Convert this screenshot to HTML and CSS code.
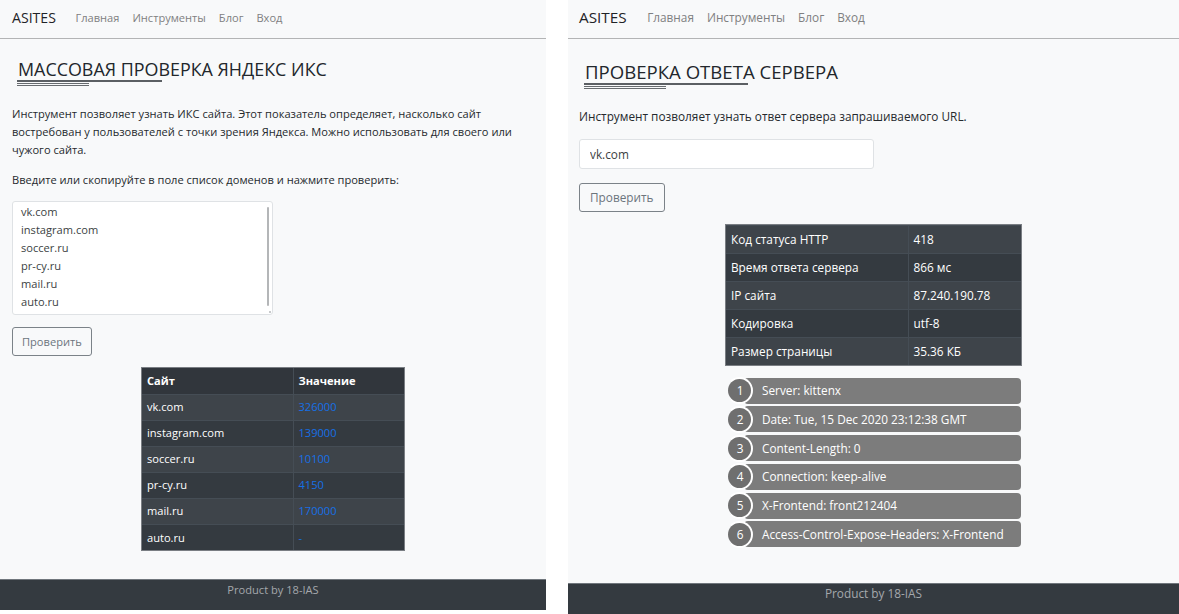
FILE: index.html
```html
<!DOCTYPE html>
<html lang="ru">
<head>
<meta charset="utf-8">
<title>ASITES</title>
<link rel="stylesheet" href="styles.css">
</head>
<body>
<div class="screens">
  <section class="panel panel-left">
    <header class="navbar">
      <a class="brand" href="#">ASITES</a>
      <nav class="nav">
        <a href="#">Главная</a>
        <a href="#">Инструменты</a>
        <a href="#">Блог</a>
        <a href="#">Вход</a>
      </nav>
    </header>
    <main class="content">
      <div class="heading">
        <h1 class="title">МАССОВАЯ ПРОВЕРКА ЯНДЕКС ИКС</h1>
        <div class="rule rule-main"></div>
        <div class="rule rule-sub"></div>
      </div>
      <p class="text">Инструмент позволяет узнать ИКС сайта. Этот показатель определяет, насколько сайт востребован у пользователей с точки зрения Яндекса. Можно использовать для своего или чужого сайта.</p>
      <p class="text">Введите или скопируйте в поле список доменов и нажмите проверить:</p>
      <div class="area-wrap">
        <textarea class="field field-area" spellcheck="false">vk.com
instagram.com
soccer.ru
pr-cy.ru
mail.ru
auto.ru</textarea>
        <span class="scroll-thumb"></span>
        <span class="resize-grip"></span>
      </div>
      <button class="btn">Проверить</button>
      <table class="dark-table iks-table">
        <thead>
          <tr><th>Сайт</th><th>Значение</th></tr>
        </thead>
        <tbody>
          <tr><td>vk.com</td><td class="val">326000</td></tr>
          <tr><td>instagram.com</td><td class="val">139000</td></tr>
          <tr><td>soccer.ru</td><td class="val">10100</td></tr>
          <tr><td>pr-cy.ru</td><td class="val">4150</td></tr>
          <tr><td>mail.ru</td><td class="val">170000</td></tr>
          <tr><td>auto.ru</td><td class="val">-</td></tr>
        </tbody>
      </table>
    </main>
    <footer class="footer">Product by 18-IAS</footer>
  </section>

  <section class="panel panel-right">
    <header class="navbar">
      <a class="brand" href="#">ASITES</a>
      <nav class="nav">
        <a href="#">Главная</a>
        <a href="#">Инструменты</a>
        <a href="#">Блог</a>
        <a href="#">Вход</a>
      </nav>
    </header>
    <main class="content">
      <div class="heading">
        <h1 class="title">ПРОВЕРКА ОТВЕТА СЕРВЕРА</h1>
        <div class="rule rule-main"></div>
        <div class="rule rule-sub"></div>
      </div>
      <p class="text">Инструмент позволяет узнать ответ сервера запрашиваемого URL.</p>
      <input class="field field-input" type="text" value="vk.com">
      <button class="btn">Проверить</button>
      <table class="dark-table info-table">
        <tbody>
          <tr><td>Код статуса HTTP</td><td>418</td></tr>
          <tr><td>Время ответа сервера</td><td>866 мс</td></tr>
          <tr><td>IP сайта</td><td>87.240.190.78</td></tr>
          <tr><td>Кодировка</td><td>utf-8</td></tr>
          <tr><td>Размер страницы</td><td>35.36 КБ</td></tr>
        </tbody>
      </table>
      <ol class="headers">
        <li class="header-item"><span class="num">1</span><span class="bar">Server: kittenx</span></li>
        <li class="header-item"><span class="num">2</span><span class="bar">Date: Tue, 15 Dec 2020 23:12:38 GMT</span></li>
        <li class="header-item"><span class="num">3</span><span class="bar">Content-Length: 0</span></li>
        <li class="header-item"><span class="num">4</span><span class="bar">Connection: keep-alive</span></li>
        <li class="header-item"><span class="num">5</span><span class="bar">X-Frontend: front212404</span></li>
        <li class="header-item"><span class="num">6</span><span class="bar">Access-Control-Expose-Headers: X-Frontend</span></li>
      </ol>
    </main>
    <footer class="footer">Product by 18-IAS</footer>
  </section>
</div>
</body>
</html>
```

FILE: styles.css
```css
* { box-sizing: border-box; }

html, body {
  margin: 0;
  padding: 0;
  background: #ffffff;
}

body {
  font-family: "Open Sans", "Noto Sans", "DejaVu Sans", sans-serif;
  color: #212529;
}

.screens {
  display: flex;
  gap: 22px;
  align-items: flex-start;
  height: 614px;
  overflow: hidden;
}

.panel {
  display: flex;
  flex-direction: column;
  background: #f8f9fa;
  font-size: var(--fs);
  line-height: var(--lh);
  overflow: hidden;
}

.panel-left {
  --fs: 11.1px;
  --lh: 18px;
  --gap: 12px;
  --pad: 12px;
  --brand: 14.1px;
  --title: 17.9px;
  --title-top: 20px;
  width: 546px;
  height: 610px;
}

.panel-right {
  --fs: 11.8px;
  --lh: 19px;
  --gap: 13px;
  --pad: 11px;
  --brand: 15.3px;
  --title: 18.6px;
  --title-top: 22px;
  flex: 1;
  height: 614px;
}

/* navbar */
.navbar {
  height: 39px;
  flex: none;
  display: flex;
  align-items: center;
  padding: 0 var(--pad) 3px;
  border-bottom: 1px solid #b3b4b5;
}

.brand {
  font-size: var(--brand);
  color: #1f2327;
  text-decoration: none;
  margin-right: 13px;
}

.panel-right .brand {
  margin-right: 14px;
}

.nav {
  display: flex;
}

.nav a {
  color: #7f8081;
  text-decoration: none;
  padding: 0 6.5px;
}

/* content */
.content {
  flex: 1;
  padding: 0 var(--pad);
  display: flex;
  flex-direction: column;
  align-items: flex-start;
}

.heading {
  width: 100%;
  margin-top: var(--title-top);
  margin-bottom: 18px;
  padding-left: 5px;
}

.panel-left .heading {
  margin-bottom: 19px;
}

.title {
  margin: 0 0 0 1px;
  font-size: var(--title);
  line-height: 1.2;
  font-weight: 400;
  color: #22272c;
}

.rule-main {
  width: 28%;
  height: 2px;
  background: #5b5f63;
}

.rule-sub {
  width: 14%;
  margin-top: 1px;
  border-bottom: 3px double #676b6f;
}

.text {
  margin: 0 0 var(--gap);
  color: #25292d;
}

.field {
  font: inherit;
  line-height: var(--lh);
  color: #3b3f43;
  background: #ffffff;
  border: 1px solid #dfe2e5;
  border-radius: 3px;
  outline: none;
}

.area-wrap {
  position: relative;
  margin: 0 0 var(--gap);
}

.field-area {
  display: block;
  width: 261px;
  height: 114px;
  padding: 1px 8px;
  margin: 0;
  overflow: hidden;
  resize: none;
}

.scroll-thumb {
  position: absolute;
  right: 4px;
  top: 6px;
  width: 2px;
  height: 99px;
  background: #b4b6b8;
  border-radius: 1px;
}

.resize-grip {
  position: absolute;
  right: 2px;
  bottom: 2px;
  width: 2px;
  height: 2px;
  background: #c8cacc;
}

.field-input {
  width: 295px;
  height: 30px;
  padding: 0 10px;
  margin: 0 0 var(--gap);
}

.btn {
  font: inherit;
  line-height: var(--lh);
  color: #6c757d;
  background: transparent;
  border: 1px solid #7b8288;
  border-radius: 3px;
  height: 29px;
  padding: 0 9px;
  margin: 0 0 var(--gap);
  cursor: pointer;
}

.panel-right .btn {
  padding: 0 10px;
  margin-top: 1px;
}

/* dark tables */
.dark-table {
  align-self: center;
  border-collapse: collapse;
  background: #343a40;
  color: #ffffff;
  outline: 1px solid #7a7e83;
  margin-bottom: var(--gap);
}

.dark-table th,
.dark-table td {
  text-align: left;
  vertical-align: middle;
  border-top: 1px solid #454d55;
}

.dark-table th + th,
.dark-table td + td {
  border-left: 1px solid #454d55;
}

.iks-table {
  width: 262px;
}

.iks-table th,
.iks-table td {
  height: 26px;
  padding: 0 4px 0 5px;
}

.iks-table th {
  font-weight: 700;
  background: #31363c;
  border-top: none;
}

.iks-table th:first-child,
.iks-table td:first-child {
  width: 151px;
}

.dark-table tbody tr:nth-child(odd) {
  background: #3e444a;
}

.val {
  color: #1670e6;
}

.info-table {
  width: 295px;
}

.info-table td {
  height: 27.8px;
  padding: 0 4px 0 5px;
}

.info-table td:first-child {
  width: 182px;
}

/* headers list */
.headers {
  align-self: center;
  width: 295px;
  list-style: none;
  margin: 0;
  padding: 0;
}

.header-item {
  display: flex;
  height: 26px;
  margin-bottom: 2.7px;
  color: #ffffff;
}

.num {
  position: relative;
  z-index: 1;
  flex: none;
  width: 27px;
  height: 27px;
  margin-top: -0.5px;
  border-radius: 50%;
  background: #6f6f6f;
  border: 2px solid #ffffff;
  border-left-color: #f8f9fa;
  display: flex;
  align-items: center;
  justify-content: center;
  padding-left: 1px;
}

.bar {
  flex: 1;
  margin-left: -9px;
  padding-left: 18px;
  background: #7c7c7c;
  border-radius: 4px;
  display: flex;
  align-items: center;
  white-space: nowrap;
}

/* footer */
.footer {
  flex: none;
  height: 31px;
  background: #343a40;
  border-top: 1px solid #70767c;
  color: #a4a8ac;
  text-align: center;
  padding-top: 1px;
}

.panel-right .footer {
  padding-top: 0;
}
```
